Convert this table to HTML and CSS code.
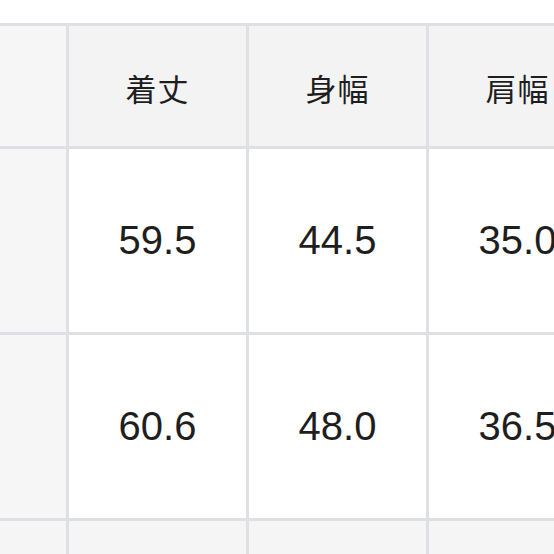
FILE: index.html
```html
<!DOCTYPE html>
<html lang="ja">
<head>
<meta charset="utf-8">
<link rel="stylesheet" href="styles.css">
</head>
<body>
<div class="page">
  <div class="size-table">
    <div class="cell head side"></div>
    <div class="cell head">着丈</div>
    <div class="cell head">身幅</div>
    <div class="cell head">肩幅</div>

    <div class="cell side"></div>
    <div class="cell num">59.5</div>
    <div class="cell num">44.5</div>
    <div class="cell num">35.0</div>

    <div class="cell side"></div>
    <div class="cell num">60.6</div>
    <div class="cell num">48.0</div>
    <div class="cell num">36.5</div>

    <div class="cell side alt"></div>
    <div class="cell num alt"></div>
    <div class="cell num alt"></div>
    <div class="cell num alt"></div>
  </div>
</div>
</body>
</html>
```

FILE: styles.css
```css
html, body {
  margin: 0;
  padding: 0;
  background: #ffffff;
  overflow: hidden;
  width: 554px;
  height: 554px;
}

.page {
  padding-top: 23px;
}

.size-table {
  display: grid;
  grid-template-columns: 66px 177px 177px 177px;
  grid-template-rows: 120px 183px 183px 183px;
  gap: 3px;
  padding-top: 3px;
  background: #dfe0e4;
  width: max-content;
}

.cell {
  display: flex;
  align-items: center;
  justify-content: center;
  background: #ffffff;
  color: #1e1e1e;
}

.head {
  background: #f3f3f4;
  font-family: "Noto Sans CJK JP", "Noto Sans", sans-serif;
  font-size: 31px;
  letter-spacing: 1px;
  padding-top: 2px;
}

.side {
  background: #f6f6f7;
}

.num {
  font-family: "Liberation Sans", Arial, sans-serif;
  font-size: 40px;
}

.alt {
  background: #f5f5f6;
}
```
